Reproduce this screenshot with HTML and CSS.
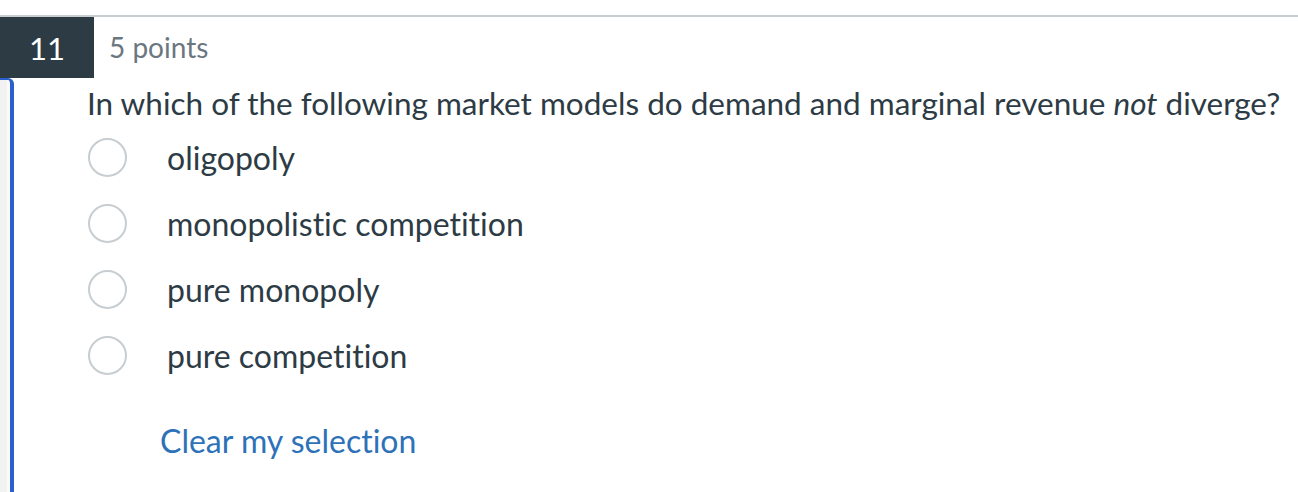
FILE: index.html
```html
<!DOCTYPE html>
<html>
<head>
<meta charset="utf-8">
<link rel="stylesheet" href="styles.css">
</head>
<body>
<div class="rule"></div>
<div class="header">
  <div class="qnum">11</div>
  <div class="points">5 points</div>
</div>
<div class="main">
  <div class="rail"></div>
  <div class="content">
    <div class="question">In which of the following market models do demand and marginal revenue <em>not</em> diverge?</div>
    <div class="answers">
      <label class="answer"><span class="radio"></span><span class="atext">oligopoly</span></label>
      <label class="answer"><span class="radio"></span><span class="atext">monopolistic competition</span></label>
      <label class="answer"><span class="radio"></span><span class="atext">pure monopoly</span></label>
      <label class="answer"><span class="radio"></span><span class="atext">pure competition</span></label>
    </div>
    <div class="clear">Clear my selection</div>
  </div>
</div>
</body>
</html>
```
FILE: styles.css
```css
html, body {
  margin: 0;
  padding: 0;
  background: #fff;
  font-family: Lato, "Liberation Sans", sans-serif;
  font-variant-ligatures: none;
  color: #2d3b45;
  overflow: hidden;
}
.rule {
  margin-top: 15px;
  height: 2px;
  background: #c7cdd1;
}
.header {
  display: flex;
  align-items: center;
  height: 61px;
}
.qnum {
  width: 94px;
  height: 61px;
  background: #2d3b45;
  color: #fff;
  font-size: 31px;
  display: flex;
  align-items: center;
  justify-content: center;
}
.points {
  margin-left: 15px;
  font-size: 28px;
  color: #6b7780;
  padding-bottom: 2px;
}
.main {
  display: flex;
  height: 414px;
}
.rail {
  width: 10px;
  flex: none;
  border-top: 2px solid #2b5fcc;
  border-right: 4px solid #2b5fcc;
  border-top-right-radius: 6px;
  background: linear-gradient(to right, #f2f2f2 0, #f2f2f2 7px, #fafafa 7px);
}
.content {
  padding-left: 73px;
}
.question {
  font-size: 31.5px;
  line-height: 38px;
  margin-top: 6px;
  white-space: nowrap;
}
.question em {
  font-style: italic;
}
.answers {
  margin-top: 15px;
  display: flex;
  flex-direction: column;
  gap: 26px;
}
.answer {
  display: flex;
  align-items: center;
  height: 40px;
}
.radio {
  width: 35px;
  height: 35px;
  border: 2px solid #c7cdd1;
  border-radius: 50%;
  margin-left: 1px;
  flex: none;
}
.atext {
  font-size: 32px;
  margin-left: 40px;
}
.clear {
  margin-top: 46px;
  margin-left: 73px;
  font-size: 32px;
  color: #2d72b8;
}
```
